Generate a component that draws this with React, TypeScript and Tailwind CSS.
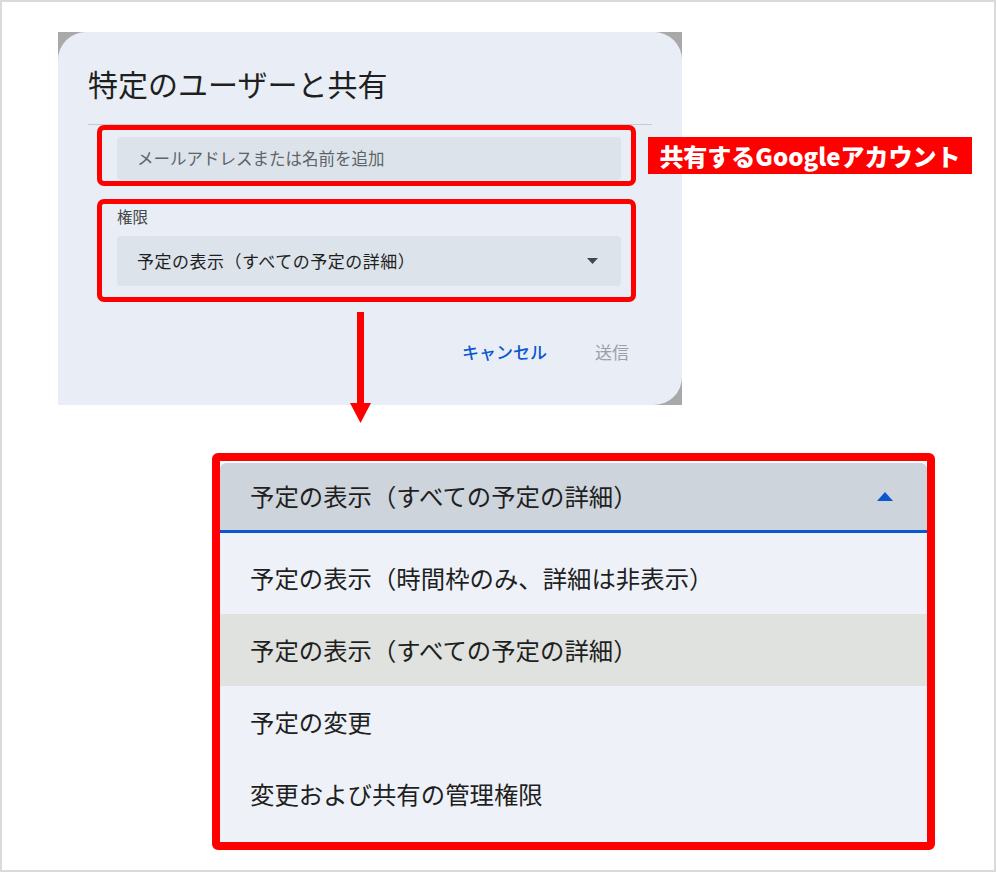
import React from 'react';

const jp = { fontFamily: '"Noto Sans CJK JP", "Noto Sans", sans-serif' };

const options = [
  '予定の表示（時間枠のみ、詳細は非表示）',
  '予定の表示（すべての予定の詳細）',
  '予定の変更',
  '変更および共有の管理権限',
];

const App: React.FC = () => {
  return (
    <div
      className="relative w-[996px] h-[872px] bg-white overflow-hidden shadow-[inset_0_0_0_2px_#dadada] pt-[32px]"
      style={jp}
    >
      {/* dialog screenshot */}
      <div className="ml-[58px] w-[624px] h-[373px] bg-[#a9a9a9]">
        <div className="h-full bg-[#e9eef6] rounded-tl-[28px] rounded-tr-[28px] rounded-br-[28px] flex flex-col">
          <h1 className="pl-[30px] pt-[34px] text-[30px] leading-[34px] text-[#1f1f1f] font-normal">
            特定のユーザーと共有
          </h1>
          <div className="ml-[30px] mt-[24px] w-[564px] h-px bg-[#c7cbd1]" />
          <div className="ml-[59px] mt-[12px] w-[504px] h-[43px] bg-[#dde3ea] rounded-[4px] flex items-center pl-[20px] text-[16.5px] text-[#5f6368]">
            メールアドレスまたは名前を追加
          </div>
          <div className="ml-[59px] mt-[26px] text-[15.5px] leading-[20px] text-[#444746]">権限</div>
          <div className="ml-[59px] mt-[10px] w-[504px] h-[50px] bg-[#dde3ea] rounded-[4px] flex items-center justify-between pl-[20px] pr-[23px] text-[17px] tracking-[0.5px] text-[#1f1f1f]">
            <span>予定の表示（すべての予定の詳細）</span>
            <svg width="11" height="6" viewBox="0 0 11 6">
              <polygon points="0,0 11,0 5.5,6" fill="#444746" />
            </svg>
          </div>
          <div className="mt-[54px] flex justify-end items-center gap-[48px] pr-[53px] text-[17px] leading-[24px]">
            <span className="text-[#0b57d0] font-medium">キャンセル</span>
            <span className="text-[#9aa0a6]">送信</span>
          </div>
        </div>
      </div>

      {/* expanded dropdown screenshot */}
      <div className="ml-[212px] mt-[48px] w-[723px] h-[397px] border-[8px] border-[#ff0000] rounded-[6px] bg-white">
        <div className="h-full pt-[2px] flex flex-col">
          <div className="h-[70px] bg-[#ced4dc] rounded-t-[6px] border-b-[3px] border-[#0b57d0] flex items-center justify-between pl-[30px] pr-[34px] text-[24.4px] text-[#1f1f1f]">
            <span>予定の表示（すべての予定の詳細）</span>
            <svg width="16" height="9" viewBox="0 0 16 9">
              <polygon points="0,9 16,9 8,0" fill="#0b57d0" />
            </svg>
          </div>
          <div className="flex-1 bg-[#eef2f8] pt-[9px]">
            {options.map((o, i) => (
              <div
                key={o}
                className={`h-[72px] flex items-center pl-[30px] text-[24.4px] text-[#1f1f1f] ${
                  i === 1 ? 'bg-[#dfe2de]' : ''
                }`}
              >
                {o}
              </div>
            ))}
          </div>
        </div>
      </div>

      {/* annotations */}
      <div className="absolute left-[97px] top-[125px] w-[539px] h-[61px] border-[5px] border-[#ff0000] rounded-[7px]" />
      <div className="absolute left-[97px] top-[199px] w-[539px] h-[103px] border-[5px] border-[#ff0000] rounded-[7px]" />
      <div className="absolute left-[648px] top-[137px] w-[324px] h-[37px] bg-[#ff0000] flex items-center justify-center text-white font-black text-[24px] leading-none">
        共有するGoogleアカウント
      </div>
      <svg className="absolute left-[350px] top-[312px]" width="22" height="112" viewBox="0 0 22 112">
        <rect x="7" y="0" width="7" height="93" fill="#ff0000" />
        <polygon points="0,91 21,91 10.5,111" fill="#ff0000" />
      </svg>
    </div>
  );
};

export default App;
